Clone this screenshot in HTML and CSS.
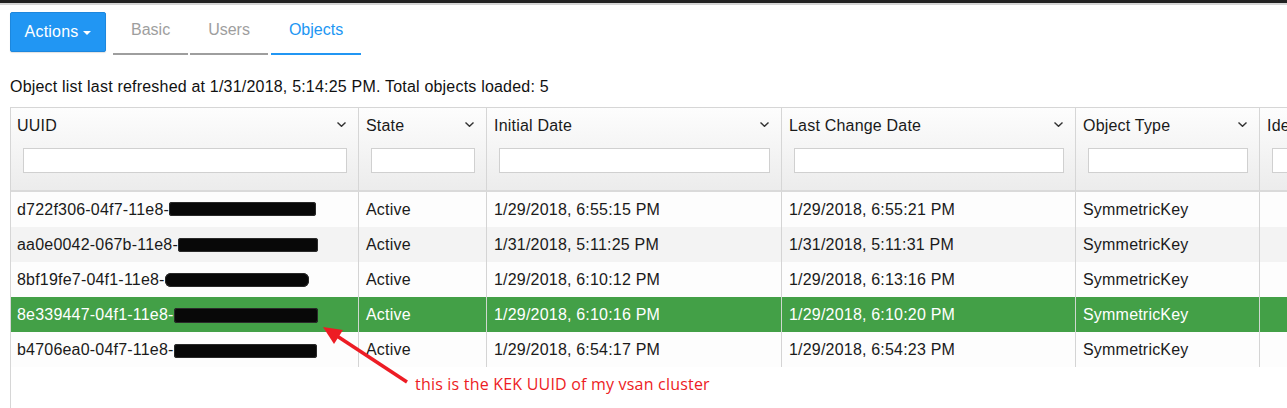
FILE: index.html
```html
<!DOCTYPE html>
<html lang="en">
<head>
<meta charset="utf-8">
<title>Objects</title>
<link rel="stylesheet" href="styles.css">
</head>
<body>
<div class="topbar"></div>
<nav class="toolbar">
  <button class="btn-actions" type="button">Actions <span class="caret"></span></button>
  <ul class="tabs">
    <li class="tab">Basic</li>
    <li class="tab">Users</li>
    <li class="tab active">Objects</li>
  </ul>
</nav>
<p class="status">Object list last refreshed at 1/31/2018, 5:14:25 PM. Total objects loaded: 5</p>
<div class="grid-wrap">
  <table class="grid">
    <colgroup>
      <col class="c-uuid"><col class="c-state"><col class="c-init"><col class="c-last"><col class="c-type"><col class="c-id">
    </colgroup>
    <thead>
      <tr>
        <th><div class="th-inner"><div class="th-title"><span>UUID</span><svg class="chev" viewBox="0 0 9 5"><polyline points="0.5,0.5 4.5,4.3 8.5,0.5"/></svg></div><div class="th-filter"><input type="text"></div></div></th>
        <th><div class="th-inner"><div class="th-title"><span>State</span><svg class="chev" viewBox="0 0 9 5"><polyline points="0.5,0.5 4.5,4.3 8.5,0.5"/></svg></div><div class="th-filter"><input type="text"></div></div></th>
        <th><div class="th-inner"><div class="th-title"><span>Initial Date</span><svg class="chev" viewBox="0 0 9 5"><polyline points="0.5,0.5 4.5,4.3 8.5,0.5"/></svg></div><div class="th-filter"><input type="text"></div></div></th>
        <th><div class="th-inner"><div class="th-title"><span>Last Change Date</span><svg class="chev" viewBox="0 0 9 5"><polyline points="0.5,0.5 4.5,4.3 8.5,0.5"/></svg></div><div class="th-filter"><input type="text"></div></div></th>
        <th><div class="th-inner"><div class="th-title"><span>Object Type</span><svg class="chev" viewBox="0 0 9 5"><polyline points="0.5,0.5 4.5,4.3 8.5,0.5"/></svg></div><div class="th-filter"><input type="text"></div></div></th>
        <th><div class="th-inner"><div class="th-title"><span>Identifier</span><svg class="chev" viewBox="0 0 9 5"><polyline points="0.5,0.5 4.5,4.3 8.5,0.5"/></svg></div><div class="th-filter"><input type="text"></div></div></th>
      </tr>
    </thead>
    <tbody>
      <tr>
        <td>d722f306-04f7-11e8-<span class="redact r1"></span></td>
        <td>Active</td>
        <td>1/29/2018, 6:55:15 PM</td>
        <td>1/29/2018, 6:55:21 PM</td>
        <td>SymmetricKey</td>
        <td></td>
      </tr>
      <tr class="alt">
        <td>aa0e0042-067b-11e8-<span class="redact r2"></span></td>
        <td>Active</td>
        <td>1/31/2018, 5:11:25 PM</td>
        <td>1/31/2018, 5:11:31 PM</td>
        <td>SymmetricKey</td>
        <td></td>
      </tr>
      <tr>
        <td>8bf19fe7-04f1-11e8-<span class="redact r3"></span></td>
        <td>Active</td>
        <td>1/29/2018, 6:10:12 PM</td>
        <td>1/29/2018, 6:13:16 PM</td>
        <td>SymmetricKey</td>
        <td></td>
      </tr>
      <tr class="selected">
        <td>8e339447-04f1-11e8-<span class="redact r4"></span></td>
        <td>Active</td>
        <td>1/29/2018, 6:10:16 PM</td>
        <td>1/29/2018, 6:10:20 PM</td>
        <td>SymmetricKey</td>
        <td></td>
      </tr>
      <tr>
        <td>b4706ea0-04f7-11e8-<span class="redact r5"></span></td>
        <td>Active</td>
        <td>1/29/2018, 6:54:17 PM</td>
        <td>1/29/2018, 6:54:23 PM</td>
        <td>SymmetricKey</td>
        <td></td>
      </tr>
    </tbody>
  </table>
</div>
<svg class="annot-arrow" viewBox="0 0 100 70" width="100" height="70">
  <line x1="92" y1="64" x2="22" y2="18"/>
  <polygon points="8,9 28,12 19,26"/>
</svg>
<div class="annot-text">this is the KEK UUID of my vsan cluster</div>
</body>
</html>
```

FILE: styles.css
```css
html, body {
  margin: 0;
  overflow: hidden;
  background: #fff;
}
body {
  font-family: "Liberation Sans", Arial, sans-serif;
  font-size: 16px;
  letter-spacing: 0.2px;
  color: #222;
  position: relative;
  height: 408px;
}
.topbar {
  height: 3px;
  background: #212121;
  border-bottom: 2px solid #d4d4d4;
}
.toolbar {
  display: flex;
  align-items: flex-start;
  padding: 7px 0 0 10px;
}
.btn-actions {
  box-sizing: border-box;
  width: 96px;
  height: 40px;
  margin: 0;
  padding: 0;
  background: #2196f3;
  border: 1px solid #1d87dd;
  border-radius: 2px;
  color: #fff;
  font-family: "Liberation Sans", Arial, sans-serif;
  font-size: 16px;
  letter-spacing: 0.2px;
  display: flex;
  align-items: center;
  justify-content: center;
  gap: 5px;
  box-shadow: 0 1px 1px rgba(0, 0, 0, 0.12);
}
.caret {
  width: 0;
  height: 0;
  border-top: 4px solid #fff;
  border-left: 4px solid transparent;
  border-right: 4px solid transparent;
  margin-top: 2px;
}
.tabs {
  display: flex;
  list-style: none;
  margin: 0 0 0 7px;
  padding: 0;
  gap: 2px;
}
.tab {
  padding: 9px 18px 14px;
  line-height: 18px;
  letter-spacing: 0;
  color: #9e9e9e;
  border-bottom: 2px solid #9e9e9e;
}
.tab.active {
  color: #2196f3;
  border-bottom-color: #2196f3;
  margin-left: 1px;
}
.status {
  margin: 23px 0 0 10px;
  line-height: 18px;
  color: #111;
}
.grid-wrap {
  margin: 11px 0 0 10px;
  border-top: 1px solid #d6d6d6;
  border-left: 1px solid #d6d6d6;
  width: 1449px;
  height: 400px;
}
.grid {
  border-collapse: separate;
  border-spacing: 0;
  table-layout: fixed;
  width: 1449px;
}
.c-uuid { width: 348px; }
.c-state { width: 128px; }
.c-init { width: 295px; }
.c-last { width: 294px; }
.c-type { width: 184px; }
.c-id { width: 200px; }
.grid th, .grid td {
  box-sizing: border-box;
}
.grid th {
  padding: 0;
  vertical-align: top;
  text-align: left;
  font-weight: normal;
  color: #1a1a1a;
  border-right: 1px solid #d6d6d6;
  border-bottom: 2px solid #dadada;
  background: linear-gradient(#fdfdfd, #ececec);
}
.th-inner {
  height: 82px;
  box-sizing: border-box;
  padding-top: 9px;
}
.th-title {
  display: flex;
  align-items: center;
  justify-content: space-between;
  line-height: 18px;
  padding: 0 12px 0 7px;
}
.grid th:first-child .th-title {
  padding-left: 6px;
}
.chev {
  width: 9px;
  height: 5px;
  margin-top: -4px;
  fill: none;
  stroke: #333;
  stroke-width: 1.4;
}
.th-filter {
  margin: 13px 11px 0 12px;
}
.th-filter input {
  display: block;
  box-sizing: border-box;
  width: 100%;
  height: 25px;
  margin: 0;
  padding: 0 4px;
  border: 1px solid #d0d0d0;
  background: #fff;
  border-radius: 0;
  outline: none;
}
.grid td {
  height: 35px;
  padding: 0 0 0 7px;
  line-height: 35px;
  white-space: nowrap;
  overflow: hidden;
  border-right: 1px solid #d4d4d4;
  background: #fdfdfd;
  color: #1a1a1a;
}
.grid td:first-child {
  padding-left: 6px;
}
.grid tr.alt td {
  background: #f3f3f3;
}
.grid tr.selected td {
  background: #43a047;
  color: #fff;
  border-right-color: #cfd8cf;
}
.redact {
  display: inline-block;
  height: 14px;
  background: #080808;
  border-radius: 3px;
  box-shadow: inset 0 0 0 1px #2a2a2a;
}
.r1 { width: 147px; vertical-align: -1px; }
.r2 { width: 140px; vertical-align: -2px; }
.r3 { width: 144px; vertical-align: -2px; margin-left: 0; border-radius: 6px; }
.r4 { width: 144px; height: 15px; vertical-align: -3px; }
.r5 { width: 143px; vertical-align: -3px; }
.annot-arrow {
  position: absolute;
  left: 315px;
  top: 318px;
  overflow: visible;
}
.annot-arrow line {
  stroke: #ed1c24;
  stroke-width: 3.5;
}
.annot-arrow polygon {
  fill: #ed1c24;
}
.annot-text {
  position: absolute;
  left: 415px;
  top: 373px;
  font-family: "Open Sans", sans-serif;
  font-size: 16px;
  line-height: 22px;
  color: #ed1c24;
  white-space: nowrap;
  letter-spacing: 0.2px;
}
```
